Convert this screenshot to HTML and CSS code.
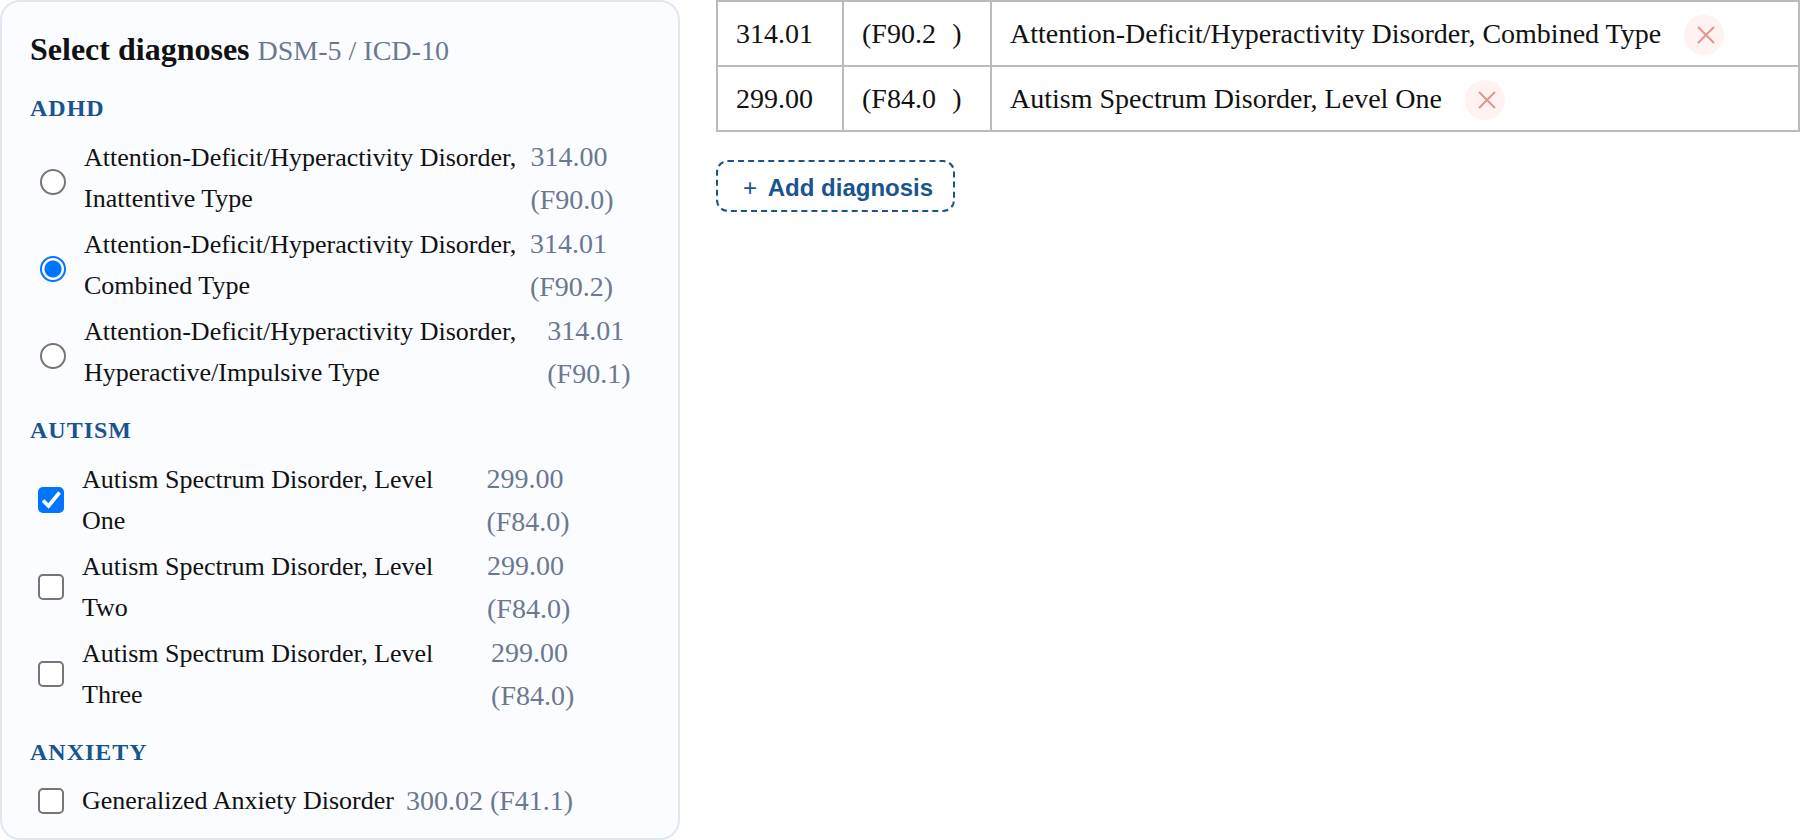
FILE: index.html
```html
<!DOCTYPE html>
<html lang="en">
<head>
    <meta charset="UTF-8">
    <meta name="viewport" content="width=device-width, initial-scale=1.0">
    <title>Select diagnoses</title>
    <link rel="stylesheet" href="styles.css">
</head>
<body>
    <div class="layout">
        <form class="picker">
            <h2 class="picker-title">Select diagnoses <span class="muted">DSM-5 / ICD-10</span></h2>

            <div class="group">
                <h3 class="group-title">ADHD</h3>
                <label class="option"><input type="radio" name="adhd"><span class="name">Attention-Deficit/Hyperactivity Disorder, Inattentive Type</span><span class="muted">314.00 (F90.0)</span></label>
                <label class="option"><input type="radio" name="adhd" checked><span class="name">Attention-Deficit/Hyperactivity Disorder, Combined Type</span><span class="muted">314.01 (F90.2)</span></label>
                <label class="option"><input type="radio" name="adhd"><span class="name">Attention-Deficit/Hyperactivity Disorder, Hyperactive/Impulsive Type</span><span class="muted">314.01 (F90.1)</span></label>
            </div>

            <div class="group">
                <h3 class="group-title">AUTISM</h3>
                <label class="option"><input type="checkbox" checked><span class="name">Autism Spectrum Disorder, Level One</span><span class="muted">299.00 (F84.0)</span></label>
                <label class="option"><input type="checkbox"><span class="name">Autism Spectrum Disorder, Level Two</span><span class="muted">299.00 (F84.0)</span></label>
                <label class="option"><input type="checkbox"><span class="name">Autism Spectrum Disorder, Level Three</span><span class="muted">299.00 (F84.0)</span></label>
            </div>

            <div class="group">
                <h3 class="group-title">ANXIETY</h3>
                <label class="option"><input type="checkbox"><span class="name">Generalized Anxiety Disorder</span><span class="muted">300.02 (F41.1)</span></label>
            </div>
        </form>

        <div class="selected">
            <table class="dx-table">
                <tr>
                    <td class="dsm">314.01</td>
                    <td class="icd">(<span class="icd-code">F90.2</span>)</td>
                    <td>Attention-Deficit/Hyperactivity Disorder, Combined Type<button type="button" class="remove" aria-label="Remove"><svg width="18" height="18" viewBox="0 0 18 18"><path d="M1 1L17 17M17 1L1 17"/></svg></button></td>
                </tr>
                <tr>
                    <td class="dsm">299.00</td>
                    <td class="icd">(<span class="icd-code">F84.0</span>)</td>
                    <td>Autism Spectrum Disorder, Level One<button type="button" class="remove" aria-label="Remove"><svg width="18" height="18" viewBox="0 0 18 18"><path d="M1 1L17 17M17 1L1 17"/></svg></button></td>
                </tr>
            </table>
            <button type="button" class="add-btn"><span class="plus">+</span> Add diagnosis</button>
        </div>
    </div>
</body>
</html>
```
FILE: styles.css
```css
* {
    box-sizing: border-box;
}

body {
    margin: 0;
    background: #fff;
    color: #111;
    font-family: "Liberation Serif", "Times New Roman", serif;
    font-size: 28px;
    line-height: 43px;
}

.layout {
    display: grid;
    grid-template-columns: 680px 1fr;
    align-items: start;
    gap: 36px;
}

/* Left panel */
.picker {
    padding: 25px 28px 16px;
    border: 2px solid #e0e7f1;
    border-radius: 20px;
    background: #fbfcff;
}

.picker-title {
    margin: 0;
    font-size: 32px;
    line-height: 45px;
}

.muted {
    color: #6b7890;
    font-size: 28px;
    font-weight: normal;
}

.group {
    display: flex;
    flex-direction: column;
    gap: 1px;
    margin-top: 17px;
}

.group-title {
    margin: 0 0 7px;
    color: #1a5490;
    font-size: 24px;
    line-height: 37px;
    letter-spacing: 1px;
}

.option {
    display: flex;
    align-items: center;
    gap: 12px;
    cursor: pointer;
}

.name {
    font-size: 26px;
    line-height: 41px;
}

.option input {
    appearance: none;
    flex-shrink: 0;
    width: 26px;
    height: 26px;
    border: 2px solid #767676;
    background: #fff;
}

.option input[type="radio"] {
    margin: 8px 6px 0 10px;
    border-radius: 50%;
}

.option input[type="radio"]:checked {
    border-color: #0075ff;
    background: radial-gradient(circle, #0075ff 8px, #fff 9px);
}

.option input[type="checkbox"] {
    margin: 6px 6px 6px 8px;
    border-radius: 5px;
}

.option input[type="checkbox"]:checked {
    border: none;
    background: #0075ff url("data:image/svg+xml,%3Csvg xmlns='http://www.w3.org/2000/svg' viewBox='0 0 26 26'%3E%3Cpath d='M5 13.5L10.5 19L21.5 5.5' fill='none' stroke='%23fff' stroke-width='3.6'/%3E%3C/svg%3E") center / 26px no-repeat;
}

/* Chosen diagnoses */
.dx-table {
    width: 100%;
    border-collapse: collapse;
}

.dx-table td {
    box-sizing: content-box;
    padding: 10px 18px;
    border: 2px solid #bbb;
}

.dx-table .dsm {
    width: 88px;
}

.dx-table .icd {
    width: 110px;
    white-space: nowrap;
}

.icd-code {
    display: inline-block;
    min-width: 81px;
}

.remove {
    display: inline-flex;
    align-items: center;
    justify-content: center;
    width: 40px;
    height: 40px;
    margin: -6px 0 -2px 23px;
    padding: 0 0 0 4px;
    border: none;
    border-radius: 50%;
    background: #fff3f2;
    vertical-align: middle;
    cursor: pointer;
}

.remove svg {
    fill: none;
    stroke: #e3948d;
    stroke-width: 2;
}

.add-btn {
    margin-top: 28px;
    padding: 12px 20px 8px;
    border: 2px dashed #1a5490;
    border-radius: 12px;
    background: #fff;
    color: #1a5490;
    font: bold 24px/28px "Liberation Sans", Arial, sans-serif;
    cursor: pointer;
}

.plus {
    display: inline-block;
    width: 24px;
    font-weight: normal;
    text-align: center;
}
```
